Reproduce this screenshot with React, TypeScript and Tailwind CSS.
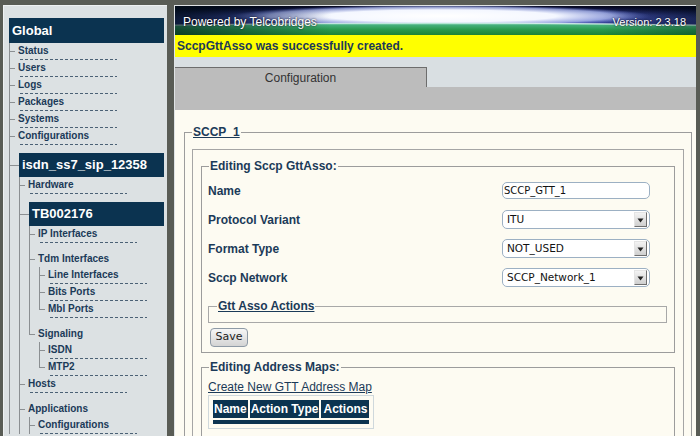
import clsx from 'clsx'

type TreeNode = { label: string; bar?: boolean; more?: boolean; children?: TreeNode[] }

const tree: TreeNode[] = [
  { label: 'Status' },
  { label: 'Users' },
  { label: 'Logs' },
  { label: 'Packages' },
  { label: 'Systems' },
  { label: 'Configurations' },
  {
    label: 'isdn_ss7_sip_12358',
    bar: true,
    more: true,
    children: [
      { label: 'Hardware' },
      {
        label: 'TB002176',
        bar: true,
        children: [
          { label: 'IP Interfaces' },
          {
            label: 'Tdm Interfaces',
            children: [{ label: 'Line Interfaces' }, { label: 'Bits Ports' }, { label: 'Mbl Ports' }],
          },
          { label: 'Signaling', children: [{ label: 'ISDN' }, { label: 'MTP2' }] },
        ],
      },
      { label: 'Hosts' },
      { label: 'Applications', more: true, children: [{ label: 'Configurations' }] },
    ],
  },
]

const dashed =
  'h-px w-[97px] ml-[2px] [background-image:repeating-linear-gradient(90deg,#4b6175_0_3px,transparent_3px_5px)]'

function TreeList({ nodes, open = false }: { nodes: TreeNode[]; open?: boolean }) {
  return (
    <ul>
      {nodes.map((n, i) => (
        <TreeItem key={n.label + i} node={n} last={!open && i === nodes.length - 1} />
      ))}
    </ul>
  )
}

function TreeItem({ node, last }: { node: TreeNode; last: boolean }) {
  const padded = node.bar || !!node.children
  return (
    <li className={clsx('flex border-[#8b8f92]', !last && 'border-l', padded && 'pt-[8px]')}>
      {last ? (
        <span
          className={clsx(
            'shrink-0 border-l border-b border-[#8b8f92]',
            node.bar ? 'w-[10px] h-[21px] -mt-[8px]' : padded ? 'w-[6px] h-[17px] -mt-[8px]' : 'w-[6px] h-[9px]',
          )}
        />
      ) : (
        <span
          className={clsx('shrink-0 h-px bg-[#8b8f92]', node.bar ? 'mt-[12px] w-[9px]' : 'mt-[8px] w-[5px]')}
        />
      )}
      {node.bar ? (
        <div className="min-w-0 flex-1">
          <div className="h-[24px] bg-[#0b3350] pl-[3px] text-[13px] font-bold leading-[24px] text-white">
            {node.label}
          </div>
          {node.children && <TreeList nodes={node.children} open={node.more} />}
        </div>
      ) : (
        <div className="ml-[3px] min-w-0 flex-1">
          <div className="h-[16px] text-[10px] leading-[16px] font-bold text-[#1b3a58]">{node.label}</div>
          {node.children ? (
            <div className="ml-[1px]">
              <TreeList nodes={node.children} open={node.more} />
            </div>
          ) : (
            <div className={dashed} />
          )}
        </div>
      )}
    </li>
  )
}

function Sidebar() {
  return (
    <aside className="w-[164px] shrink-0 border-l border-t border-[#eef1f2] bg-[#dce1e3] pl-[5px] pr-[3px] pt-[12px]">
      <div className="h-[25px] bg-[#0b3350] pl-[3px] text-[13px] font-bold leading-[25px] text-white">Global</div>
      <TreeList nodes={tree} open />
    </aside>
  )
}

function SelectBox({ value }: { value: string }) {
  return (
    <div className="flex h-[19px] w-[148px] items-center rounded-[5px] border border-[#9cb0c3] bg-white pl-[4px] pr-[2px]">
      <span className="font-['DejaVu_Sans',sans-serif] text-[10.5px] text-[#111]">{value}</span>
      <span className="ml-auto flex h-[15px] w-[13px] items-center justify-center border border-t-[#e4e4e4] border-l-[#e4e4e4] border-r-[#6f6f6f] border-b-[#6f6f6f] [background-image:linear-gradient(#f3f3f3,#cfcfcf)]">
        <svg width="7" height="5" viewBox="0 0 7 5" className="mt-[2px]">
          <path d="M0.5 0.5h6L3.5 4.5z" fill="#222" />
        </svg>
      </span>
    </div>
  )
}

// the space/earth picture behind the header text
function BannerArt() {
  return (
    <svg className="absolute inset-0 h-full w-full" viewBox="0 0 521 29" preserveAspectRatio="none">
      <defs>
        <linearGradient id="sky" x1="0" y1="0" x2="0" y2="1">
          <stop offset="0" stopColor="#03051a" />
          <stop offset="0.35" stopColor="#0a0e30" />
          <stop offset="0.6" stopColor="#1f286a" />
        </linearGradient>
        <radialGradient id="haze" cx="0.5" cy="0.5" r="0.5">
          <stop offset="0" stopColor="#7080e4" stopOpacity="0.95" />
          <stop offset="0.6" stopColor="#4050b0" stopOpacity="0.6" />
          <stop offset="1" stopColor="#1a2060" stopOpacity="0" />
        </radialGradient>
        <radialGradient id="glow" cx="0.5" cy="0.5" r="0.5">
          <stop offset="0" stopColor="#ffffff" />
          <stop offset="0.55" stopColor="#f4f7ff" />
          <stop offset="0.82" stopColor="#b4c0f4" stopOpacity="0.75" />
          <stop offset="1" stopColor="#7080e0" stopOpacity="0" />
        </radialGradient>
        <linearGradient id="earth" gradientUnits="userSpaceOnUse" x1="0" y1="17" x2="0" y2="29">
          <stop offset="0" stopColor="#aee6d2" />
          <stop offset="0.18" stopColor="#45b07c" />
          <stop offset="0.55" stopColor="#2a994f" />
          <stop offset="1" stopColor="#1c8236" />
        </linearGradient>
        <linearGradient id="sides" x1="0" y1="0" x2="1" y2="0">
          <stop offset="0" stopColor="#001018" stopOpacity="0.6" />
          <stop offset="0.3" stopColor="#001018" stopOpacity="0" />
          <stop offset="0.82" stopColor="#001018" stopOpacity="0" />
          <stop offset="1" stopColor="#001018" stopOpacity="0.3" />
        </linearGradient>
      </defs>
      <rect width="521" height="29" fill="url(#sky)" />
      <ellipse cx="272" cy="12" rx="370" ry="13" fill="url(#haze)" />
      <ellipse cx="266" cy="10" rx="210" ry="11" fill="url(#glow)" />
      <ellipse cx="262" cy="401" rx="2500" ry="384" fill="url(#earth)" stroke="#dff8ef" strokeOpacity="0.8" strokeWidth="1.2" />
      <rect width="521" height="29" fill="url(#sides)" />
    </svg>
  )
}

const fieldRows: { label: string; value: string; input?: boolean }[] = [
  { label: 'Name', value: 'SCCP_GTT_1', input: true },
  { label: 'Protocol Variant', value: 'ITU' },
  { label: 'Format Type', value: 'NOT_USED' },
  { label: 'Sccp Network', value: 'SCCP_Network_1' },
]

export default function App() {
  return (
    <div className="flex h-[436px] gap-[7px] overflow-hidden bg-[#595c55] pl-[3px] pr-[4px] pt-[5px] font-['Liberation_Sans',Arial,sans-serif]">
      <Sidebar />
      <main className="flex min-w-0 flex-1 flex-col border-l border-t border-[#dfe3e5]">
        <div className="relative h-[29px] shrink-0 overflow-hidden">
          <BannerArt />
          <div className="relative flex h-full items-end justify-between pb-[6px] pl-[8px] pr-[10px]">
            <span className="text-[12px] leading-[14px] text-white [text-shadow:0_0_2px_#000]">
              Powered by Telcobridges
            </span>
            <span className="text-[11px] leading-[14px] text-white [text-shadow:0_0_2px_#000]">Version: 2.3.18</span>
          </div>
        </div>
        <div className="flex h-[22px] shrink-0 items-center bg-[#ffff00] pl-[2px] text-[12px] font-bold text-[#1c3a58]">
          SccpGttAsso was successfully created.
        </div>
        <div className="h-[10px] shrink-0 bg-[#d9dfe2]" />
        <div className="flex h-[20px] shrink-0 bg-[#d9dfe2]">
          <div className="flex w-[252px] items-center justify-center border-r border-t border-[#6d6d6d] bg-[#bcbcbc] text-[12px] text-[#333]">
            Configuration
          </div>
        </div>
        <div className="h-[23px] shrink-0 bg-[#bcbcbc]" />
        <div className="shrink-0 grow bg-[#fdfbf2] pl-[9px] pr-[4px] pt-[15px]">
          <fieldset className="border border-[#9c9c9c] px-[7px] pt-[10px]">
            <legend className="px-[1px] text-[12px] font-bold leading-[14px] text-[#1b3a58] underline">SCCP_1</legend>
            <div className="border border-[#a5a5a5] px-[8px] pb-[20px] pt-[9px]">
              <fieldset className="border border-[#9c9c9c] pb-[5px] pl-[6px] pr-[7px] pt-[3px]">
                <legend className="ml-[1px] px-[1px] text-[12px] font-bold leading-[14px] text-[#1b3a58]">
                  Editing Sccp GttAsso:
                </legend>
                <div className="grid auto-rows-[29px] grid-cols-[294px_148px] items-center">
                  {fieldRows.map((r) => (
                    <div key={r.label} className="contents">
                      <div className="text-[12px] font-bold text-[#1b3a58]">{r.label}</div>
                      {r.input ? (
                        <div className="flex h-[17px] w-[148px] items-center rounded-[5px] border border-[#9cb0c3] bg-white px-[1px] font-['DejaVu_Sans',sans-serif] text-[10px] text-[#111]">
                          {r.value}
                        </div>
                      ) : (
                        <SelectBox value={r.value} />
                      )}
                    </div>
                  ))}
                </div>
                <fieldset className="mt-[7px] border border-[#a8a8a8] pb-[9px] pl-[8px]">
                  <legend className="px-[1px] text-[12px] font-bold leading-[14px] text-[#1b3a58] underline">
                    Gtt Asso Actions
                  </legend>
                </fieldset>
                <button className="ml-[2px] mt-[4px] h-[19px] w-[38px] rounded-[4px] border border-[#8e9aa6] font-['DejaVu_Sans',sans-serif] text-[11px] text-[#222] [background-image:linear-gradient(#f6f6f6,#d4d4d4)]">
                  Save
                </button>
              </fieldset>
              <fieldset className="mt-[7px] border border-[#9c9c9c] pb-[5px] pl-[6px] pr-[7px] pt-[6px]">
                <legend className="ml-[1px] px-[1px] text-[12px] font-bold leading-[14px] text-[#1b3a58]">
                  Editing Address Maps:
                </legend>
                <a href="#" className="block text-[12px] leading-[14px] text-[#1b3a58] underline">
                  Create New GTT Address Map
                </a>
                <div className="mt-[1px] inline-block border border-[#cfd8dc] p-[2px]">
                  <table className="border-separate border-spacing-[2px]">
                    <thead>
                      <tr className="text-[12px] font-bold leading-[18px] text-white">
                        <th className="bg-[#0b3350] px-[1px] font-bold">Name</th>
                        <th className="bg-[#0b3350] px-[1px] font-bold">Action Type</th>
                        <th className="bg-[#0b3350] px-[2px] font-bold">Actions</th>
                      </tr>
                    </thead>
                    <tbody>
                      <tr>
                        <td colSpan={3} className="h-[4px] bg-[#0b3350] p-0" />
                      </tr>
                    </tbody>
                  </table>
                </div>
              </fieldset>
            </div>
          </fieldset>
        </div>
      </main>
    </div>
  )
}
